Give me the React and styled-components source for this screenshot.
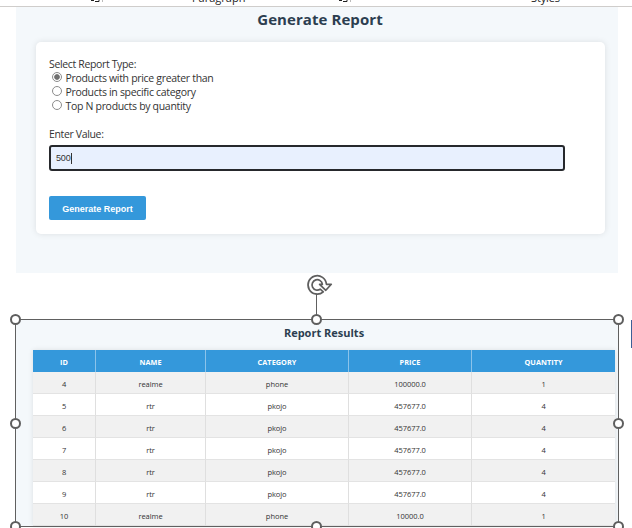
import React from "react";
import styled, { createGlobalStyle } from "styled-components";

const GlobalStyle = createGlobalStyle`
  * { box-sizing: border-box; }
  body { margin: 0; background: #fff; color: #333; font-family: "Open Sans", "Noto Sans", sans-serif; }
`;

const Page = styled.div`
  position: relative;
  width: 632px;
  height: 528px;
  overflow: hidden;
  background: #fff;
`;

const Ribbon = styled.div`
  display: grid;
  grid-template-columns: 90px 102px 146px 193px 1fr;
  height: 7px;
  overflow: hidden;
  border-bottom: 1px solid #cfcdcb;
`;

const RibbonLabel = styled.span`
  height: 16px;
  margin-top: -9px;
  font-size: 11px;
  line-height: 14px;
  letter-spacing: ${(p) => p.$spacing || "0"};
  color: #222;
`;

const LauncherIcon = styled.svg`
  display: block;
  width: 15px;
  height: 5px;
`;

const FormPanel = styled.section`
  width: 602px;
  height: 266px;
  margin-left: 16px;
  padding: 0 13px 0 20px;
  background: #f4f8fb;
`;

const PageTitle = styled.h1`
  margin: 0 11px 0 10px;
  height: 35px;
  font-size: 15px;
  line-height: 25px;
  letter-spacing: 0.07px;
  font-weight: 700;
  text-align: center;
  color: #2c3e50;
`;

const Card = styled.form`
  height: 192px;
  padding: 15px 13px 13px;
  border-radius: 5px;
  background: #fff;
  box-shadow: 0 0 6px rgba(0, 0, 0, 0.1);
`;

const FieldLabel = styled.div`
  height: 14px;
  font-size: 10.5px;
  line-height: 15px;
  letter-spacing: -0.35px;
  white-space: nowrap;
`;

const RadioRow = styled.label`
  display: flex;
  align-items: center;
  height: 14px;
  padding-left: 3px;
  gap: 3.5px;
  font-size: 10.5px;
  line-height: 14px;
  letter-spacing: -0.31px;
  white-space: nowrap;
`;

const RadioDot = styled.span`
  flex: none;
  width: 10px;
  height: 10px;
  margin-top: -2px;
  border: 1px solid #8c8c8c;
  border-radius: 50%;
  background: ${(p) => (p.$checked ? "radial-gradient(circle, #707070 0 2.4px, #fff 3.2px)" : "#fff")};
`;

const ValueField = styled.div`
  display: flex;
  align-items: center;
  width: 516px;
  height: 26px;
  margin-top: 4px;
  padding-left: 5px;
  border: 2px solid #26282c;
  border-radius: 3px;
  background: #e8f0fe;
  font: 9px "Liberation Sans", Arial, sans-serif;
  letter-spacing: -0.15px;
`;

const Caret = styled.span`
  width: 1px;
  height: 11px;
  background: #333;
`;

const Spacer = styled.div`
  height: ${(p) => p.$h}px;
`;

const SubmitButton = styled.button`
  display: block;
  width: 97px;
  height: 24px;
  margin: 25px 0 0;
  padding: 1px 0 0;
  border: 0;
  border-radius: 2px;
  background: #3498db;
  color: #fff;
  font: bold 9px "Liberation Sans", Arial, sans-serif;
  letter-spacing: 0.01px;
  white-space: nowrap;
`;

const ResultsPanel = styled.section`
  width: 603px;
  height: 207px;
  margin: 46px 0 0 15px;
  padding: 0 3px 0 18px;
  background: #f4f8fb;
`;

const ResultsTitle = styled.h2`
  margin: 0;
  height: 31px;
  font-size: 11px;
  line-height: 27px;
  font-weight: 700;
  text-align: center;
  color: #2c3e50;
`;

const Table = styled.div`
  width: 582px;
  box-shadow: 0 0 5px rgba(0, 0, 0, 0.1);
`;

const Row = styled.div`
  display: grid;
  grid-template-columns: 63px 110px 143px 123px 143px;
  height: 22px;
  background: ${(p) => (p.$striped ? "#f1f1f1" : "#fff")};
`;

const HeadRow = styled(Row)`
  background: #3498db;
`;

const Cell = styled.div`
  display: flex;
  align-items: center;
  justify-content: center;
  padding-top: 2px;
  border-right: 1px solid #dfdfdf;
  border-bottom: 1px solid #e3e3e3;
  font-size: 7.5px;
  letter-spacing: -0.05px;
  &:last-child { border-right: 0; }
`;

const HeadCell = styled(Cell)`
  border-right-color: #8bc3ea;
  border-bottom: 0;
  padding-top: 1px;
  font-size: 7.3px;
  letter-spacing: 0.04px;
  font-weight: 700;
  color: #fff;
`;

const SelectionFrame = styled.div`
  position: absolute;
  left: 15px;
  top: 319px;
  width: 604px;
  height: 208px;
  border: 1px solid #606060;
`;

const Handle = styled.span`
  position: absolute;
  left: ${(p) => p.$x}px;
  top: ${(p) => p.$y}px;
  width: 11px;
  height: 11px;
  margin: -6px 0 0 -6px;
  border: 2px solid #5e5e5e;
  border-radius: 50%;
  background: #fff;
`;

const RotateHandle = styled.svg`
  position: absolute;
  left: 304px;
  top: 272px;
`;

const EdgeMark = styled.div`
  position: absolute;
  right: 0;
  top: 320px;
  width: 1px;
  height: 28px;
  background: #3c5f96;
`;

const options = [
  { text: "Products with price greater than", checked: true },
  { text: "Products in specific category" },
  { text: "Top N products by quantity" },
];
const columns = ["ID", "NAME", "CATEGORY", "PRICE", "QUANTITY"];
const rows = [
  ["4", "realme", "phone", "100000.0", "1"],
  ["5", "rtr", "pkojo", "457677.0", "4"],
  ["6", "rtr", "pkojo", "457677.0", "4"],
  ["7", "rtr", "pkojo", "457677.0", "4"],
  ["8", "rtr", "pkojo", "457677.0", "4"],
  ["9", "rtr", "pkojo", "457677.0", "4"],
  ["10", "realme", "phone", "10000.0", "1"],
];
const handles = [
  [1, 1], [302, 1], [604, 1],
  [1, 105], [604, 105],
  [1, 208], [302, 208], [604, 208],
];

function Launcher() {
  return (
    <LauncherIcon viewBox="0 0 15 5">
      <path d="M1 .5h3M5 1.5h4V0" fill="none" stroke="#222" />
      <path d="M12.5 0v2" stroke="#bbb" />
    </LauncherIcon>
  );
}

export default function App() {
  return (
    <Page>
      <GlobalStyle />
      <Ribbon>
        <span />
        <Launcher />
        <RibbonLabel>Paragraph</RibbonLabel>
        <Launcher />
        <RibbonLabel $spacing="-0.15px">Styles</RibbonLabel>
      </Ribbon>
      <FormPanel>
        <PageTitle>Generate Report</PageTitle>
        <Card>
          <FieldLabel>Select Report Type:</FieldLabel>
          {options.map((o) => (
            <RadioRow key={o.text}>
              <RadioDot $checked={o.checked} />
              {o.text}
            </RadioRow>
          ))}
          <Spacer $h={14} />
          <FieldLabel>Enter Value:</FieldLabel>
          <ValueField>500<Caret /></ValueField>
          <SubmitButton type="button">Generate Report</SubmitButton>
        </Card>
      </FormPanel>
      <ResultsPanel>
        <ResultsTitle>Report Results</ResultsTitle>
        <Table>
          <HeadRow>
            {columns.map((c) => <HeadCell key={c}>{c}</HeadCell>)}
          </HeadRow>
          {rows.map((r, i) => (
            <Row key={r[0]} $striped={i % 2 === 0}>
              {r.map((v, j) => <Cell key={columns[j]}>{v}</Cell>)}
            </Row>
          ))}
        </Table>
      </ResultsPanel>
      <EdgeMark />
      <SelectionFrame />
      <RotateHandle width="30" height="48" viewBox="0 0 30 48">
        <path d="M12.5 22v21" stroke="#606060" />
        <path d="M19.3 19.8A9.2 9.2 0 1 1 22.4 12.3H27.3L21.8 18.3L15.6 12.3H18.4A5.2 5.2 0 1 0 16.2 17.2Z" fill="#fff" stroke="#5e5e5e" strokeWidth="1.7" strokeLinejoin="round" />
      </RotateHandle>
      {handles.map(([x, y]) => <Handle key={`${x}-${y}`} $x={x + 15} $y={y + 319} />)}
    </Page>
  );
}
